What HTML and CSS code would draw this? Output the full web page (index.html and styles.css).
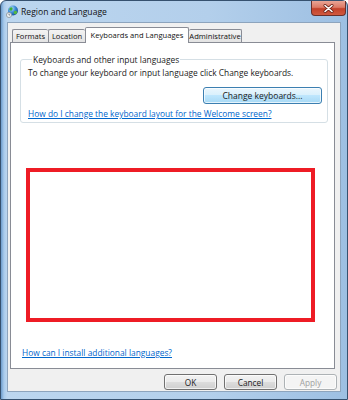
FILE: index.html
```html
<!DOCTYPE html>
<html lang="en">
<head>
    <meta charset="UTF-8">
    <meta name="viewport" content="width=device-width, initial-scale=1.0">
    <title>Region and Language</title>
    <link rel="stylesheet" href="styles.css">
</head>
<body>
    <div class="window">
        <div class="titlebar">
            <svg class="app-icon" width="12" height="13" viewBox="0 0 12 13">
                <defs>
                    <radialGradient id="globe" cx="0.35" cy="0.3" r="0.8">
                        <stop offset="0" stop-color="#bfe6ff"/>
                        <stop offset="0.5" stop-color="#3a8ad6"/>
                        <stop offset="1" stop-color="#14498c"/>
                    </radialGradient>
                </defs>
                <circle cx="7" cy="5.5" r="5" fill="url(#globe)"/>
                <path d="M4.5 2.5 C6 2 7 3 6.5 4.5 C6 6 4.5 6 3.5 5 C3 4 3.5 3 4.5 2.5 Z" fill="#3fae3a"/>
                <path d="M8.5 6 C10 5.5 11.5 6.5 11 8 C10 9.5 8.5 9.5 8 8.5 C7.5 7.5 7.8 6.3 8.5 6 Z" fill="#55b83e"/>
                <circle cx="3" cy="10" r="2.6" fill="#e8ecef" stroke="#8a949c" stroke-width="0.8"/>
                <path d="M3 8.6 V10 H4.1" fill="none" stroke="#44505a" stroke-width="0.6"/>
            </svg>
            <span class="title">Region and Language</span>
            <div class="close">
                <svg width="11" height="9" viewBox="0 0 11 9">
                    <path d="M2 1.5 L9 7.5 M9 1.5 L2 7.5" stroke="#6b2318" stroke-width="3" stroke-linecap="round"/>
                    <path d="M2 1.5 L9 7.5 M9 1.5 L2 7.5" stroke="#ffffff" stroke-width="1.6" stroke-linecap="round"/>
                </svg>
            </div>
        </div>
        <div class="client">
            <div class="tabs">
                <div class="tab tab-formats">Formats</div>
                <div class="tab tab-location">Location</div>
                <div class="tab active">Keyboards and Languages</div>
                <div class="tab tab-admin">Administrative</div>
            </div>
            <div class="panel">
                <fieldset class="group">
                    <legend>Keyboards and other input languages</legend>
                    <p class="hint">To change your keyboard or input language click Change keyboards.</p>
                    <div class="group-actions">
                        <button class="btn btn-default">Change keyboards...</button>
                    </div>
                    <a class="link" href="#">How do I change the keyboard layout for the Welcome screen?</a>
                </fieldset>
                <div class="redbox"></div>
                <a class="link install" href="#">How can I install additional languages?</a>
            </div>
            <div class="dialog-buttons">
                <button class="btn">OK</button>
                <button class="btn">Cancel</button>
                <button class="btn" disabled>Apply</button>
            </div>
        </div>
    </div>
</body>
</html>
```

FILE: styles.css
```css
*{
    box-sizing: border-box;
}
body{
    margin: 0;
    font-family: "Open Sans", "Noto Sans", sans-serif;
    font-size: 8.4px;
    color: #1a1a1a;
    background: #fff;
}
.window{
    width: 348px;
    height: 400px;
    display: flex;
    flex-direction: column;
    background: linear-gradient(90deg, #6d9ccc 0px, #a9cbec 3px, #bcd6ef 6px, #b3cfeb 60%, #9dbfe2 100%);
    border: 1px solid #36516f;
    border-radius: 6px 6px 0 0;
    padding: 0 6px 7px 6px;
}
.titlebar{
    height: 21px;
    display: flex;
    align-items: flex-start;
}
.app-icon{
    margin: 4px 0 0 -1px;
}
.title{
    margin: 5px 0 0 3px;
    font-size: 8.6px;
    color: #111;
}
.close{
    margin-left: auto;
    margin-right: -5px;
    width: 35px;
    height: 15px;
    display: flex;
    justify-content: center;
    align-items: center;
    border: 1px solid #6a2f2a;
    border-top: none;
    border-radius: 0 0 4px 4px;
    background: linear-gradient(#e9a596 0%, #dd7a66 45%, #c3412a 55%, #d0593f 100%);
}
.client{
    flex: 1;
    display: flex;
    flex-direction: column;
    background: #f0f0f0;
    border: 1px solid #8da4bd;
    padding: 4px 3px 0 2px;
}
.tabs{
    display: flex;
    align-items: flex-end;
    height: 15px;
    padding-left: 2px;
    position: relative;
    z-index: 1;
    font-size: 7.6px;
}
.tab{
    height: 13px;
    line-height: 12px;
    text-align: center;
    white-space: nowrap;
    border: 1px solid #898c95;
    border-bottom: none;
    border-right: none;
    border-radius: 2px 2px 0 0;
    background: linear-gradient(#f3f3f3, #e3e3e3);
    color: #111;
}
.tab-formats{
    width: 36px;
}
.tab-location{
    width: 37px;
}
.tab.active{
    width: 104px;
    height: 16px;
    line-height: 14px;
    margin-bottom: -1px;
    background: #fff;
    border-right: 1px solid #898c95;
}
.tab-admin{
    width: 53px;
    border-left: none;
    border-right: 1px solid #898c95;
}
.panel{
    height: 327px;
    margin-right: 2px;
    background: #fff;
    border: 1px solid #898c95;
    display: flex;
    flex-direction: column;
    align-items: flex-start;
}
.group{
    width: 308px;
    margin: 11px 0 0 9px;
    padding: 0 6px 3px 7px;
    border: 1px solid #d5dfe5;
    border-radius: 3px;
}
.group legend{
    padding: 0 1px;
    margin-left: 4px;
    line-height: 11px;
}
.hint{
    margin: 2px 0 0 0;
    line-height: 11px;
}
.group-actions{
    display: flex;
    justify-content: flex-end;
    margin-top: 9px;
}
.link{
    display: block;
    color: #0066cc;
    text-decoration: underline;
    line-height: 11px;
}
.group .link{
    margin-top: 4px;
}
.btn{
    font-family: inherit;
    font-size: 8.3px;
    color: #1a1a1a;
    height: 16px;
    padding: 0 6px;
    border: 1px solid #707070;
    border-radius: 3px;
    background: linear-gradient(#f2f2f2 0%, #ebebeb 49%, #dddddd 50%, #cfcfcf 100%);
    box-shadow: inset 0 0 0 1px rgba(255, 255, 255, 0.7);
}
.btn-default{
    width: 119px;
    height: 17px;
    font-size: 8.5px;
    border-color: #3c7fb1;
    background: linear-gradient(#eaf6fd 0%, #d9f0fc 49%, #bee6fd 50%, #a7d9f5 100%);
    margin-right: -1px;
}
.btn:disabled{
    color: #a0a0a0;
    border-color: #adb2b5;
    background: #f4f4f4;
}
.redbox{
    width: 289px;
    height: 154px;
    margin: 45px 0 0 15px;
    border: 4px solid #ee1c25;
}
.install{
    margin: 25px 0 0 11px;
}
.dialog-buttons{
    display: flex;
    justify-content: flex-end;
    gap: 7px;
    margin-top: 5px;
}
.dialog-buttons .btn{
    width: 53px;
}
```
